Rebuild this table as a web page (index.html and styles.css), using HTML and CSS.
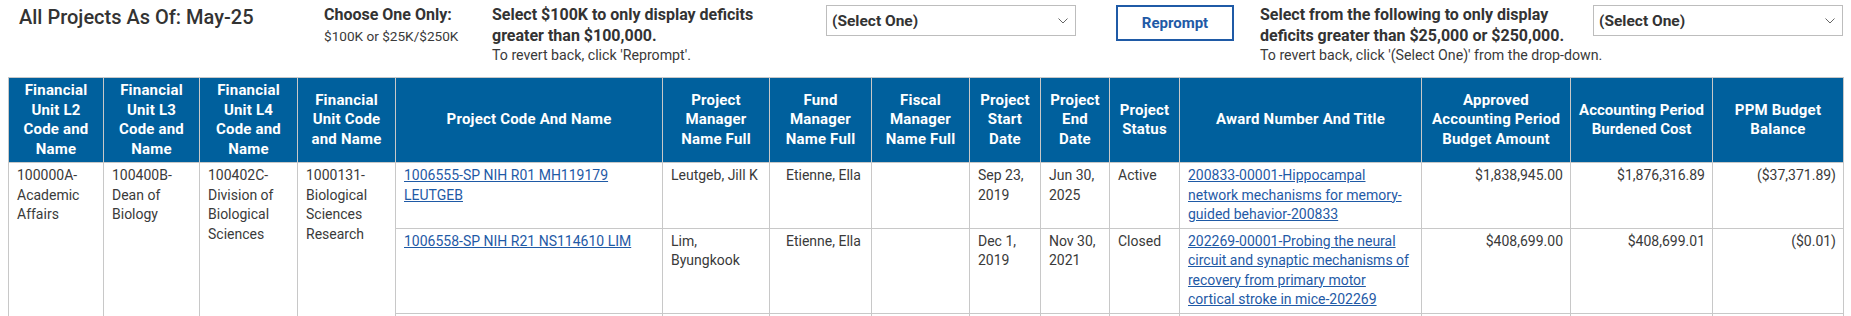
FILE: index.html
```html
<!DOCTYPE html>
<html lang="en">
<head>
<meta charset="utf-8">
<title>All Projects</title>
<link rel="stylesheet" href="styles.css">
</head>
<body>
<div class="page">
  <div class="toolbar">
    <div class="title">All Projects As Of: May-25</div>
    <div class="choose">
      <div class="lead">Choose One Only:</div>
      <div class="note note-amt">$100K or $25K/$250K</div>
    </div>
    <div class="prompt prompt-a">
      <div class="lead">Select $100K to only display deficits<br>greater than $100,000.</div>
      <div class="note">To revert back, click 'Reprompt'.</div>
    </div>
    <div class="select">
      <span>(Select One)</span>
      <svg class="chev" width="10" height="6" viewBox="0 0 10 6"><polyline points="0.5,0.5 5,5 9.5,0.5" fill="none" stroke="#666" stroke-width="1"/></svg>
    </div>
    <button class="btn">Reprompt</button>
    <div class="prompt prompt-b">
      <div class="lead">Select from the following to only display<br>deficits greater than $25,000 or $250,000.</div>
      <div class="note">To revert back, click '(Select One)' from the drop-down.</div>
    </div>
    <div class="select">
      <span>(Select One)</span>
      <svg class="chev" width="10" height="6" viewBox="0 0 10 6"><polyline points="0.5,0.5 5,5 9.5,0.5" fill="none" stroke="#666" stroke-width="1"/></svg>
    </div>
  </div>

  <table class="grid">
    <colgroup>
      <col style="width:95px"><col style="width:96px"><col style="width:98px"><col style="width:98px">
      <col style="width:267px"><col style="width:107px"><col style="width:102px"><col style="width:98px">
      <col style="width:71px"><col style="width:69px"><col style="width:70px"><col style="width:242px">
      <col style="width:149px"><col style="width:142px"><col style="width:131px">
    </colgroup>
    <thead>
      <tr>
        <th>Financial Unit L2 Code and Name</th>
        <th>Financial Unit L3 Code and Name</th>
        <th>Financial Unit L4 Code and Name</th>
        <th>Financial Unit Code and Name</th>
        <th>Project Code And Name</th>
        <th>Project Manager Name Full</th>
        <th>Fund Manager Name Full</th>
        <th>Fiscal Manager Name Full</th>
        <th>Project Start Date</th>
        <th>Project End Date</th>
        <th>Project Status</th>
        <th>Award Number And Title</th>
        <th>Approved Accounting Period Budget Amount</th>
        <th class="tight">Accounting Period Burdened Cost</th>
        <th>PPM Budget Balance</th>
      </tr>
    </thead>
    <tbody>
      <tr>
        <td rowspan="3">100000A-Academic Affairs</td>
        <td rowspan="3">100400B-Dean of Biology</td>
        <td rowspan="3">100402C-Division of Biological Sciences</td>
        <td rowspan="3">1000131-Biological Sciences Research</td>
        <td><a href="#">1006555-SP NIH R01 MH119179 LEUTGEB</a></td>
        <td>Leutgeb, Jill K</td>
        <td class="fund">Etienne, Ella</td>
        <td></td>
        <td>Sep 23, 2019</td>
        <td>Jun 30, 2025</td>
        <td>Active</td>
        <td><a href="#">200833-00001-Hippocampal network mechanisms for memory-guided behavior-200833</a></td>
        <td class="num">$1,838,945.00</td>
        <td class="num">$1,876,316.89</td>
        <td class="num">($37,371.89)</td>
      </tr>
      <tr>
        <td><a href="#">1006558-SP NIH R21 NS114610 LIM</a></td>
        <td>Lim, Byungkook</td>
        <td class="fund">Etienne, Ella</td>
        <td></td>
        <td>Dec 1, 2019</td>
        <td>Nov 30, 2021</td>
        <td>Closed</td>
        <td><a href="#">202269-00001-Probing the neural circuit and synaptic mechanisms of recovery from primary motor cortical stroke in mice-202269</a></td>
        <td class="num">$408,699.00</td>
        <td class="num">$408,699.01</td>
        <td class="num">($0.01)</td>
      </tr>
      <tr class="blank">
        <td></td><td></td><td class="fund"></td><td></td><td></td><td></td>
        <td></td><td></td><td class="num"></td><td class="num"></td><td class="num"></td>
      </tr>
    </tbody>
  </table>
</div>
</body>
</html>
```

FILE: styles.css
```css
html, body {
  margin: 0;
  padding: 0;
  background: #ffffff;
}

body {
  font-family: Roboto, "Liberation Sans", Arial, sans-serif;
  color: #333333;
}

.page {
  padding: 0 8px;
}

.toolbar {
  display: flex;
  align-items: flex-start;
  height: 77px;
  box-sizing: border-box;
  padding-top: 5px;
}

.toolbar > * {
  flex-shrink: 0;
}

.title {
  width: 316px;
  padding-left: 11px;
  box-sizing: border-box;
  font-size: 20px;
  line-height: 24px;
  font-weight: 500;
  color: #333333;
  white-space: nowrap;
}

.choose {
  width: 168px;
  white-space: nowrap;
}

.lead {
  font-size: 16px;
  line-height: 20.7px;
  font-weight: 700;
  color: #333333;
}

.note {
  font-size: 14.2px;
  line-height: 19.5px;
  color: #3a3a3a;
}

.note-amt {
  font-size: 13.6px;
  line-height: 20px;
}

.prompt {
  white-space: nowrap;
}

.prompt-a {
  width: 334px;
}

.prompt-b {
  width: 333px;
}

.select {
  width: 250px;
  height: 31px;
  box-sizing: border-box;
  border: 1px solid #bdbdbd;
  background: #ffffff;
  display: flex;
  align-items: center;
  justify-content: space-between;
  padding: 0 7px 0 5px;
  font-size: 15.5px;
  font-weight: 700;
  color: #333333;
}

.chev {
  display: block;
}

.btn {
  margin-left: 40px;
  margin-right: 26px;
  width: 118px;
  height: 36px;
  box-sizing: border-box;
  border: 2px solid #1f5aa6;
  background: #ffffff;
  color: #1f5aa6;
  font-family: Roboto, "Liberation Sans", Arial, sans-serif;
  font-size: 15px;
  font-weight: 700;
  padding: 0;
}

.grid {
  table-layout: fixed;
  width: 1835px;
  border-collapse: collapse;
  border: 1px solid #c8c8c8;
  font-size: 14px;
  line-height: 19.5px;
}

.grid th {
  background: #00609d;
  color: #ffffff;
  font-size: 15px;
  letter-spacing: 0.2px;
  font-weight: 700;
  text-align: center;
  vertical-align: middle;
  padding: 3px 8px;
  border: 1px solid #c8c8c8;
}

.grid th.tight {
  padding: 3px 3px;
  letter-spacing: 0;
}

.grid td {
  vertical-align: top;
  text-align: left;
  padding: 3px 8px;
  border: 1px solid #c8c8c8;
  color: #3a3a3a;
}

.grid tr.blank td {
  height: 40px;
}

.grid td.fund {
  padding-left: 16px;
}

.grid td.num {
  text-align: right;
  padding-right: 7px;
}

.grid a {
  color: #1f5aa6;
  text-decoration: underline;
}
```
